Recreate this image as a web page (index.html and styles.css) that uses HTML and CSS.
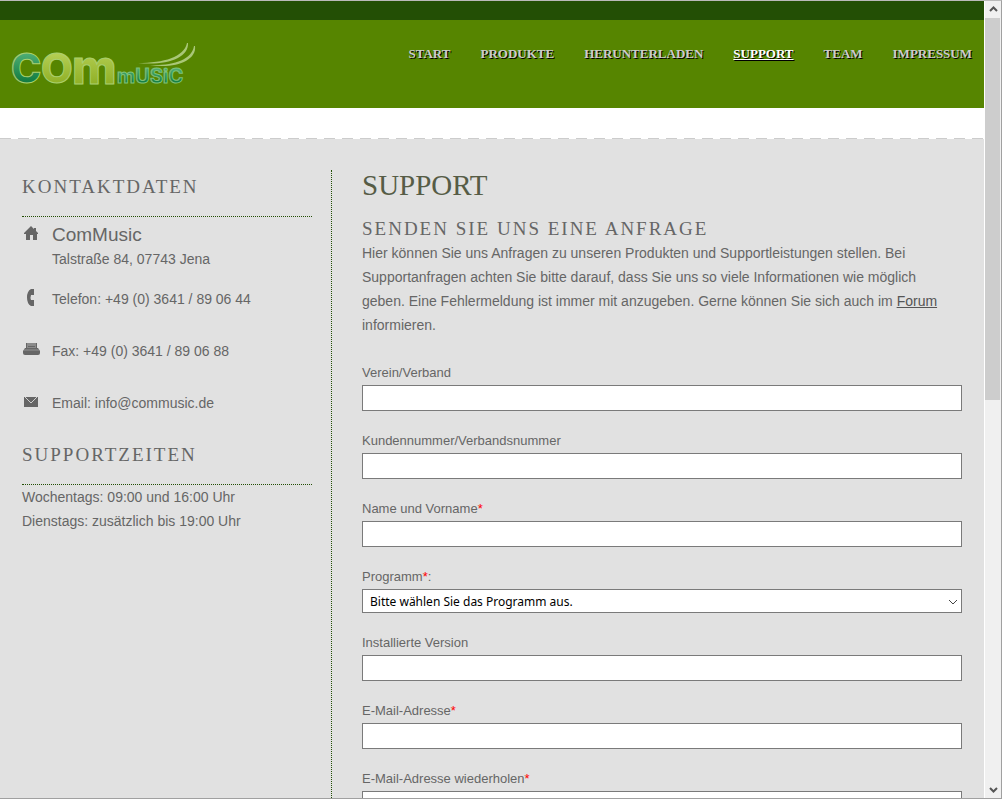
FILE: index.html
```
<!DOCTYPE html>
<html lang="de">
<head>
    <meta charset="UTF-8">
    <meta name="viewport" content="width=device-width, initial-scale=1.0">
    <title>ComMusic - Support</title>
    <link rel="stylesheet" href="styles.css">
</head>
<body>
    <div class="window">
        <div class="page">
            <div class="topbar"></div>
            <header class="header">
                <a class="logo" href="#" aria-label="ComMusic">
                    <svg width="190" height="60" viewBox="0 0 190 60">
                        <defs>
                            <linearGradient id="teal" x1="0" y1="0" x2="0" y2="1">
                                <stop offset="0.2" stop-color="#4fae74"/>
                                <stop offset="0.8" stop-color="#107a40"/>
                            </linearGradient>
                            <linearGradient id="lime" x1="0" y1="0" x2="0" y2="1">
                                <stop offset="0.2" stop-color="#b5cf55"/>
                                <stop offset="0.9" stop-color="#8aab1e"/>
                            </linearGradient>
                        </defs>
                        <g class="logo-big">
                            <text x="-1" y="43" fill="url(#teal)">C</text>
                            <text x="29" y="43" fill="url(#lime)">O</text>
                            <text class="logo-m" x="60" y="44" fill="url(#lime)">m</text>
                        </g>
                        <text class="logo-small" x="105" y="43" fill="url(#teal)">mUSiC</text>
                        <path d="M126 23C152 23 172 17 175 3h1C177 18 154 26 126 23Z" fill="#a9c777"/>
                        <path d="M138 25C160 26 180 20 182 6h1C185 21 162 29 138 25Z" fill="#a9c777"/>
                    </svg>
                </a>
                <nav class="nav">
                    <a href="#">START</a>
                    <a href="#">PRODUKTE</a>
                    <a href="#">HERUNTERLADEN</a>
                    <a class="active" href="#">SUPPORT</a>
                    <a href="#">TEAM</a>
                    <a href="#">IMPRESSUM</a>
                </nav>
            </header>
            <div class="dashes"></div>

            <div class="content">
                <aside class="sidebar">
                    <h3>KONTAKTDATEN</h3>
                    <ul class="contact">
                        <li class="address">
                            <svg class="icon" width="18" height="20" viewBox="0 0 18 20"><path d="M9 3 2 10v1h2v6h4v-5h3v5h4v-6h1v-1l-2-2V5h-2v1z"/></svg>
                            <div>
                                <strong>ComMusic</strong>
                                Talstraße 84, 07743 Jena
                            </div>
                        </li>
                        <li>
                            <svg class="icon" width="18" height="20" viewBox="0 0 18 20"><path d="M9 2h3v6H9q-1 3 0 5h3v6H9q-4-2-4-8.500t4-8.500z"/></svg>
                            <div>Telefon: +49 (0) 3641 / 89 06 44</div>
                        </li>
                        <li>
                            <svg class="icon" width="18" height="20" viewBox="0 0 18 20"><path d="M4 4h11v6H4z" fill="#8b8b8b"/><path d="M4 4h1v5h9V4h1v6H4zM6 7h7v1H6z"/><path d="M3 9h13l2 3v2q0 2-2 2H3q-2 0-2-2v-2z"/><path d="M2 11h15" stroke="#949494"/></svg>
                            <div>Fax: +49 (0) 3641 / 89 06 88</div>
                        </li>
                        <li>
                            <svg class="icon" width="18" height="20" viewBox="0 0 18 20"><path d="M2 6h14v10H2z"/><path d="m3 6 6 6 6-6" fill="none" stroke="#d0d0d0"/></svg>
                            <div>Email: info@commusic.de</div>
                        </li>
                    </ul>
                    <h3>SUPPORTZEITEN</h3>
                    <p>Wochentags: 09:00 und 16:00 Uhr<br>Dienstags: zusätzlich bis 19:00 Uhr</p>
                </aside>

                <main class="main">
                    <h1>SUPPORT</h1>
                    <h2>SENDEN SIE UNS EINE ANFRAGE</h2>
                    <p>Hier können Sie uns Anfragen zu unseren Produkten und Supportleistungen stellen. Bei Supportanfragen achten Sie bitte darauf, dass Sie uns so viele Informationen wie möglich geben. Eine Fehlermeldung ist immer mit anzugeben. Gerne können Sie sich auch im <a href="#">Forum</a> informieren.</p>

                    <form class="form">
                        <div class="field">
                            <label for="verein">Verein/Verband</label>
                            <input type="text" id="verein">
                        </div>
                        <div class="field">
                            <label for="kundennummer">Kundennummer/Verbandsnummer</label>
                            <input type="text" id="kundennummer">
                        </div>
                        <div class="field">
                            <label for="name">Name und Vorname<span class="required">*</span></label>
                            <input type="text" id="name">
                        </div>
                        <div class="field">
                            <label for="programm">Programm<span class="required">*</span>:</label>
                            <div class="select">
                                <select id="programm">
                                    <option>Bitte wählen Sie das Programm aus.</option>
                                </select>
                                <svg class="chevron" width="10" height="6" viewBox="0 0 10 6"><path d="m1 1 4 4 4-4"/></svg>
                            </div>
                        </div>
                        <div class="field">
                            <label for="version">Installierte Version</label>
                            <input type="text" id="version">
                        </div>
                        <div class="field">
                            <label for="email">E-Mail-Adresse<span class="required">*</span></label>
                            <input type="email" id="email">
                        </div>
                        <div class="field">
                            <label for="email2">E-Mail-Adresse wiederholen<span class="required">*</span></label>
                            <input type="email" id="email2">
                        </div>
                    </form>
                </main>
            </div>
        </div>

        <div class="scrollbar">
            <button type="button" aria-label="Nach oben"><svg width="9" height="7" viewBox="0 0 9 7"><path d="m1 5 3.5-3.5L8 5"/></svg></button>
            <div class="track"><div class="thumb"></div></div>
            <button type="button" aria-label="Nach unten"><svg width="9" height="7" viewBox="0 0 9 7"><path d="m1 2 3.5 3.5L8 2"/></svg></button>
        </div>
    </div>
</body>
</html>
```
FILE: styles.css
```
* {
    box-sizing: border-box;
}

body {
    margin: 0;
    font-family: "Liberation Sans", Arial, sans-serif;
    font-size: 14px;
    line-height: 24px;
    color: #666;
}

h1, h2, h3, p, ul {
    margin: 0;
    padding: 0;
}

.window {
    display: flex;
    height: 100vh;
    border: 1px solid #a0a0a0;
    border-top-color: #bababa;
    border-left: none;
    overflow: hidden;
}

.page {
    flex: 1;
    min-width: 0;
    overflow: hidden;
    background: #e1e1e1;
}

/* Header */
.topbar {
    height: 19px;
    background: #234f05;
}

.header {
    display: flex;
    justify-content: space-between;
    align-items: flex-start;
    height: 88px;
    padding: 20px 12px 0;
    background: #568500;
}

.logo svg {
    display: block;
    overflow: visible;
}

.logo text {
    stroke: #a9cf70;
    stroke-width: 1px;
    font-family: Inter, sans-serif;
    font-weight: 800;
}

.logo-big {
    font-size: 41px;
}

.logo .logo-m {
    font-size: 48px;
}

.logo .logo-small {
    font-size: 20px;
    font-weight: 700;
    stroke: #7fc07a;
}

.nav {
    display: flex;
    gap: 30px;
    padding-top: 2px;
    font-family: "Liberation Serif", "Times New Roman", serif;
    font-size: 13px;
    font-weight: bold;
}

.nav a {
    color: #ccc;
    text-decoration: none;
    text-shadow: 1px 1px 0 #000;
}

.nav .active {
    color: #fff;
    text-decoration: underline;
}

.dashes {
    height: 31px;
    background: repeating-linear-gradient(90deg, #ccc 0 11px, #fff 11px 18px) bottom / 100% 1px no-repeat #fff;
}

/* Content */
.content {
    display: flex;
    padding: 31px 22px;
}

.sidebar {
    width: 310px;
    padding: 5px 19px 0 0;
    border-right: 1px dotted #234f05;
}

h2, h3 {
    font-family: "Liberation Serif", "Times New Roman", serif;
    font-size: 19px;
    font-weight: normal;
    letter-spacing: 2px;
}

h3 {
    padding-bottom: 17px;
    border-bottom: 1px dotted #234f05;
}

.contact {
    padding: 6px 0 28px;
    list-style: none;
}

.contact li {
    display: flex;
    gap: 12px;
    margin-top: 28px;
}

.contact .address {
    margin: 0 0 -12px;
}

.contact strong {
    display: block;
    font-size: 19px;
    font-weight: normal;
}

.icon {
    fill: #666;
}

.main {
    flex: 1;
    min-width: 0;
    padding-left: 30px;
}

h1 {
    margin-bottom: 17px;
    font-family: "Liberation Serif", "Times New Roman", serif;
    font-size: 29px;
    font-weight: normal;
    line-height: 30px;
    color: #565c46;
}

.main a {
    color: #555;
}

/* Form */
.form {
    margin-top: 24px;
}

.field {
    margin-bottom: 17px;
}

.field label {
    display: block;
    padding-top: 1px;
    font-size: 13px;
}

.form .field:first-child {
    margin-top: -1px;
}

.field input,
.field select {
    display: block;
    width: 100%;
    height: 26px;
    padding: 0 7px;
    border: 1px solid #7a7a7a;
    border-radius: 0;
    background: #fff;
    color: #000;
}

.field select {
    height: 24px;
    font-family: "Noto Sans", Tahoma, sans-serif;
    font-size: 12px;
    appearance: none;
}

.select {
    position: relative;
}

.chevron {
    position: absolute;
    top: 10px;
    right: 4px;
    fill: none;
    stroke: #444;
    pointer-events: none;
}

.required {
    color: #f00;
}

/* Scrollbar */
.scrollbar {
    display: flex;
    flex-direction: column;
    width: 17px;
    border-left: 1px solid #fff;
    background: #f0f0f0;
}

.scrollbar button {
    display: flex;
    align-items: center;
    justify-content: center;
    height: 17px;
    padding: 0;
    border: none;
    background: none;
}

.scrollbar path {
    fill: none;
    stroke: #555;
    stroke-width: 2;
}

.track {
    flex: 1;
}

.thumb {
    height: 50%;
    margin-right: 1px;
    background: #cdcdcd;
}
```
